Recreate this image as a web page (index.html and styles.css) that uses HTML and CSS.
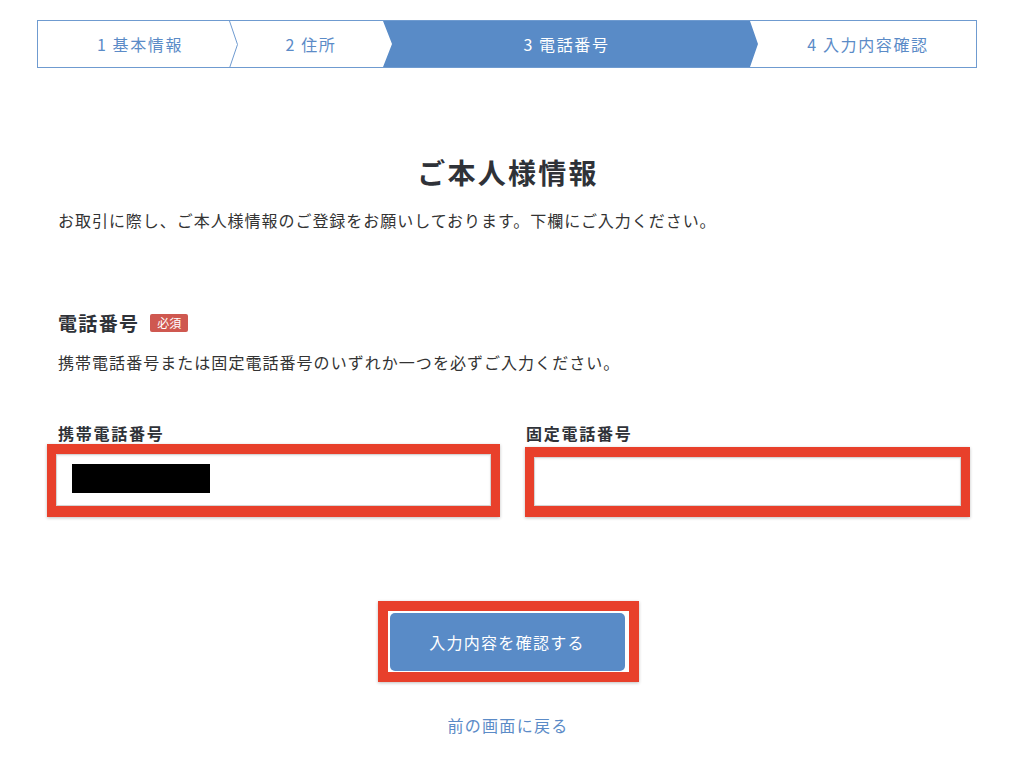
FILE: index.html
```html
<!DOCTYPE html>
<html lang="ja">
<head>
<meta charset="utf-8">
<title>ご本人様情報</title>
<link rel="stylesheet" href="styles.css">
</head>
<body>
<ol class="steps">
  <li class="step step-1">1 基本情報</li>
  <li class="step step-2"><svg class="sep" width="10" height="47" viewBox="0 0 10 47"><path d="M0.5 0 L8.5 23.5 L0.5 47" fill="none" stroke="#6f9bd0" stroke-width="1"/></svg>2 住所</li>
  <li class="step step-3 active"><span class="label">3 電話番号</span></li>
  <li class="step step-4">4 入力内容確認</li>
</ol>

<main class="main">
  <h1 class="title">ご本人様情報</h1>
  <p class="lead">お取引に際し、ご本人様情報のご登録をお願いしております。下欄にご入力ください。</p>

  <h2 class="section-title">電話番号<span class="badge">必須</span></h2>
  <p class="note">携帯電話番号または固定電話番号のいずれか一つを必ずご入力ください。</p>

  <div class="fields">
    <div class="field field-mobile">
      <div class="field-label">携帯電話番号</div>
      <div class="mark">
        <div class="input"><span class="redact"></span></div>
      </div>
    </div>
    <div class="field field-fixed">
      <div class="field-label">固定電話番号</div>
      <div class="mark">
        <div class="input"></div>
      </div>
    </div>
  </div>

  <div class="actions">
    <div class="mark mark-btn">
      <button class="submit" type="button">入力内容を確認する</button>
    </div>
    <a class="back" href="#">前の画面に戻る</a>
  </div>
</main>
</body>
</html>
```

FILE: styles.css
```css
* { box-sizing: border-box; }

body {
  margin: 0;
  background: #ffffff;
  font-family: "Noto Sans CJK JP", "Noto Sans", sans-serif;
  color: #333333;
}

.steps {
  list-style: none;
  margin: 20px 0 0 37px;
  padding: 0;
  width: 940px;
  height: 48px;
  border: 1px solid #6f9bd0;
  display: flex;
}

.step {
  position: relative;
  display: flex;
  align-items: center;
  justify-content: center;
  font-size: 16px;
  letter-spacing: 0.1em;
  color: #5b8bc7;
  white-space: nowrap;
}

.step-1 { flex: 0 0 191px; padding-left: 13px; }
.step-2 { flex: 0 0 154px; padding-left: 10px; }
.step-3 { flex: 0 0 367px; color: #ffffff; }
.step-4 { flex: 0 0 226px; padding-left: 10px; }

.sep {
  position: absolute;
  left: 0;
  top: 0;
}

.step-3::before {
  content: "";
  position: absolute;
  left: 0;
  top: 0;
  bottom: 0;
  right: -8px;
  background: #598bc7;
  clip-path: polygon(0 0, calc(100% - 8px) 0, 100% 50%, calc(100% - 8px) 100%, 0 100%, 9px 50%);
  z-index: 1;
}

.step-3 .label {
  position: relative;
  z-index: 2;
}

.main {
  margin-left: 58px;
  width: 900px;
}

.title {
  margin: 84px 0 0;
  font-size: 28px;
  line-height: 40px;
  font-weight: 700;
  letter-spacing: 0.08em;
  text-align: center;
  color: #2f3238;
}

.lead {
  margin: 16px 0 0;
  font-size: 16px;
  line-height: 24px;
  letter-spacing: 0.06em;
  color: #333333;
}

.section-title {
  margin: 77px 0 0;
  font-size: 19px;
  line-height: 28px;
  font-weight: 700;
  letter-spacing: 0.07em;
  color: #2f3238;
  display: flex;
  align-items: center;
}

.badge {
  display: inline-flex;
  align-items: center;
  justify-content: center;
  margin-left: 11px;
  width: 38px;
  height: 18px;
  border-radius: 2px;
  background: #cf5850;
  color: #ffffff;
  font-size: 12px;
  font-weight: 400;
  letter-spacing: 0;
}

.note {
  margin: 13px 0 0;
  font-size: 16px;
  line-height: 24px;
  letter-spacing: 0.065em;
  color: #333333;
}

.fields {
  margin: 49px 0 0 -11px;
  display: grid;
  grid-template-columns: 453px 445px;
  column-gap: 25px;
  align-items: start;
}

.field-label {
  font-size: 16px;
  line-height: 20px;
  font-weight: 700;
  letter-spacing: 0.11em;
  color: #2f3238;
}

.field-mobile .field-label { margin-left: 11px; }
.field-fixed .field-label { margin-left: 1px; }

.mark {
  border: 9px solid #e8402b;
  border-top-width: 10px;
  border-bottom-width: 11px;
  box-shadow: 0 1px 3px rgba(0, 0, 0, 0.25);
}

.field-mobile .mark { margin-top: 1px; }
.field-fixed .mark { margin-top: 4px; }

.input {
  background: #ffffff;
  border: 1px solid #d4d4d4;
  box-shadow: inset 0 1px 2px rgba(0, 0, 0, 0.08);
  padding: 9px 15px;
}

.field-mobile .input { height: 52px; }
.field-fixed .input { height: 49px; }

.redact {
  display: block;
  width: 138px;
  height: 29px;
  background: #000000;
}

.actions {
  margin-top: 84px;
  display: flex;
  flex-direction: column;
  align-items: center;
}

.mark-btn {
  width: 261px;
  height: 81px;
  border-width: 10px;
  padding: 2px 4px 1px 2px;
  background: #ffffff;
}

.submit {
  display: block;
  width: 100%;
  height: 58px;
  border: none;
  border-radius: 5px;
  background: #598bc7;
  color: #ffffff;
  font-family: "Noto Sans CJK JP", "Noto Sans", sans-serif;
  font-size: 16px;
  letter-spacing: 0.08em;
  cursor: pointer;
}

.back {
  margin-top: 31px;
  font-size: 16px;
  line-height: 24px;
  letter-spacing: 0.08em;
  color: #5b8bc7;
  text-decoration: none;
}
```
